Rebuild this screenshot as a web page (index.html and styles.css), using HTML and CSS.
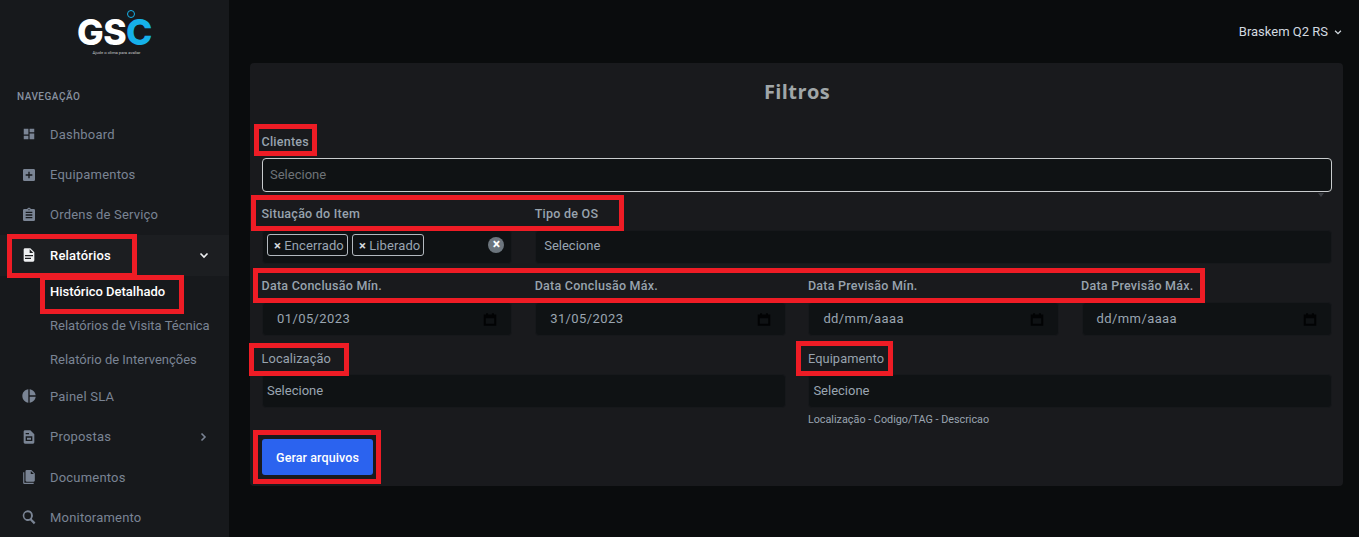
FILE: index.html
```html
<!DOCTYPE html>
<html lang="pt-BR">
<head>
    <meta charset="UTF-8">
    <meta name="viewport" content="width=device-width, initial-scale=1.0">
    <title>Filtros</title>
    <link rel="stylesheet" href="styles.css">
</head>
<body>

    <!-- Sidebar -->
    <aside class="sidebar">
        <div class="logo">
            <div class="logo-mark">GS<span class="logo-c">C</span><span class="logo-ring"></span></div>
            <div class="logo-tag">Ajude o clima para avaliar</div>
        </div>

        <div class="nav-title">NAVEGAÇÃO</div>

        <nav class="nav">
            <a class="nav-item" href="#">
                <svg class="nav-icon icon-sm" viewBox="0 0 24 24"><path d="M13,3V9H21V3M13,21H21V11H13M3,21H11V15H3M3,13H11V3H3V13Z"/></svg>
                Dashboard
            </a>
            <a class="nav-item" href="#">
                <svg class="nav-icon" viewBox="0 0 24 24"><path d="M19,3H5C3.89,3 3,3.89 3,5V19A2,2 0 0,0 5,21H19A2,2 0 0,0 21,19V5C21,3.89 20.1,3 19,3M17,13H13V17H11V13H7V11H11V7H13V11H17V13Z"/></svg>
                Equipamentos
            </a>
            <a class="nav-item" href="#">
                <svg class="nav-icon" viewBox="0 0 24 24"><path d="M19,3H14.82C14.4,1.84 13.3,1 12,1C10.7,1 9.6,1.84 9.18,3H5A2,2 0 0,0 3,5V19A2,2 0 0,0 5,21H19A2,2 0 0,0 21,19V5A2,2 0 0,0 19,3M12,3A1,1 0 0,1 13,4A1,1 0 0,1 12,5A1,1 0 0,1 11,4A1,1 0 0,1 12,3M7,7H17V9H7V7M7,11H17V13H7V11M7,15H17V17H7V15Z"/></svg>
                Ordens de Serviço
            </a>
            <a class="nav-item active" href="#">
                <svg class="nav-icon" viewBox="0 0 24 24"><path d="M13,9H18.5L13,3.5V9M6,2H14L20,8V20A2,2 0 0,1 18,22H6C4.89,22 4,21.1 4,20V4C4,2.89 4.89,2 6,2M15,18V16H6V18H15M18,14V12H6V14H18Z"/></svg>
                Relatórios
                <svg class="nav-arrow" viewBox="0 0 12 12"><path d="M2.5 4.5 6 8l3.5-3.5"/></svg>
            </a>
            <div class="sub-nav">
                <a class="sub-item current" href="#">Histórico Detalhado</a>
                <a class="sub-item" href="#">Relatórios de Visita Técnica</a>
                <a class="sub-item last" href="#">Relatório de Intervenções</a>
            </div>
            <a class="nav-item" href="#">
                <svg class="nav-icon" viewBox="0 0 24 24"><path d="M11,2V22C5.9,21.5 2,17.2 2,12C2,6.8 5.9,2.5 11,2M13,2V11H22C21.5,6.2 17.8,2.5 13,2M13,13V22C17.7,21.5 21.5,17.8 22,13H13Z"/></svg>
                Painel SLA
            </a>
            <a class="nav-item" href="#">
                <svg class="nav-icon" viewBox="0 0 24 24"><path fill-rule="evenodd" d="M6,2H14L20,8V20A2,2 0 0,1 18,22H6C4.89,22 4,21.1 4,20V4C4,2.89 4.89,2 6,2M7,6V8H12V6H7M7,11V18H17V11H7M9,13H15V16H9V13Z"/></svg>
                Propostas
                <svg class="nav-arrow closed" viewBox="0 0 12 12"><path d="M4.5 2.5 8 6l-3.5 3.5"/></svg>
            </a>
            <a class="nav-item" href="#">
                <svg class="nav-icon icon-sm" viewBox="0 0 24 24"><path d="M15,7H20.5L15,1.5V7M8,0H16L22,6V18A2,2 0 0,1 20,20H8C6.89,20 6,19.1 6,18V2A2,2 0 0,1 8,0M4,4V22H20V24H4A2,2 0 0,1 2,22V4H4Z"/></svg>
                Documentos
            </a>
            <a class="nav-item" href="#">
                <svg class="nav-icon" viewBox="0 0 24 24"><path fill-rule="evenodd" d="M10 2a8 8 0 0 1 6.3 12.9l5.4 5.4-2.4 2.4-5.4-5.4A8 8 0 1 1 10 2zm0 3a5 5 0 1 0 0 10 5 5 0 0 0 0-10z"/></svg>
                Monitoramento
            </a>
        </nav>
    </aside>

    <!-- Content -->
    <main class="content">
        <header class="topbar">
            <span>Braskem Q2 RS</span>
            <svg class="user-arrow" viewBox="0 0 12 12"><path d="M2.5 4.5 6 8l3.5-3.5"/></svg>
        </header>

        <section class="card">
            <h2 class="card-title">Filtros</h2>

            <div class="field">
                <label class="field-label first">Clientes</label>
                <div class="input input-focus">Selecione</div>
                <span class="input-caret"></span>
            </div>

            <div class="form-grid">
                <div class="field">
                    <label class="field-label">Situação do Item</label>
                    <div class="input input-tags">
                        <span class="tag"><b>×</b> Encerrado</span>
                        <span class="tag"><b>×</b> Liberado</span>
                        <span class="tags-clear">×</span>
                    </div>
                </div>
                <div class="field span-3">
                    <label class="field-label">Tipo de OS</label>
                    <div class="input input-select pad-wide">Selecione</div>
                </div>

                <div class="field">
                    <label class="field-label">Data Conclusão Mín.</label>
                    <div class="input input-date">01/05/2023
                        <svg class="date-icon" viewBox="0 0 12 12"><path d="M1.5 3h9v8h-9zM1.5 4.5h9M3.5 1v2M8.5 1v2"/></svg>
                    </div>
                </div>
                <div class="field">
                    <label class="field-label">Data Conclusão Máx.</label>
                    <div class="input input-date">31/05/2023
                        <svg class="date-icon" viewBox="0 0 12 12"><path d="M1.5 3h9v8h-9zM1.5 4.5h9M3.5 1v2M8.5 1v2"/></svg>
                    </div>
                </div>
                <div class="field">
                    <label class="field-label">Data Previsão Mín.</label>
                    <div class="input input-date">dd/mm/aaaa
                        <svg class="date-icon" viewBox="0 0 12 12"><path d="M1.5 3h9v8h-9zM1.5 4.5h9M3.5 1v2M8.5 1v2"/></svg>
                    </div>
                </div>
                <div class="field">
                    <label class="field-label">Data Previsão Máx.</label>
                    <div class="input input-date">dd/mm/aaaa
                        <svg class="date-icon" viewBox="0 0 12 12"><path d="M1.5 3h9v8h-9zM1.5 4.5h9M3.5 1v2M8.5 1v2"/></svg>
                    </div>
                </div>

                <div class="field span-2">
                    <label class="field-label plain">Localização</label>
                    <div class="input input-select">Selecione</div>
                </div>
                <div class="field span-2">
                    <label class="field-label plain">Equipamento</label>
                    <div class="input input-select">Selecione</div>
                    <small class="field-help">Localização - Codigo/TAG - Descricao</small>
                </div>
            </div>

            <button class="btn-primary" type="button">Gerar arquivos</button>
        </section>
    </main>

    <!-- Red annotation boxes drawn over the screenshot -->
    <div class="mark mark-relatorios"></div>
    <div class="mark mark-historico"></div>
    <div class="mark mark-clientes"></div>
    <div class="mark mark-situacao"></div>
    <div class="mark mark-datas"></div>
    <div class="mark mark-localizacao"></div>
    <div class="mark mark-equipamento"></div>
    <div class="mark mark-gerar"></div>

</body>
</html>
```

FILE: styles.css
```css
/* General */
* { margin: 0; padding: 0; box-sizing: border-box; }
html, body { height: 100%; overflow: hidden; }
body { display: flex; background: #0a0c0d; color: #9aa5b1; font-family: Roboto, "Liberation Sans", sans-serif;
    font-size: 13px; position: relative; }
a { text-decoration: none; color: inherit; }

/* Sidebar */
.sidebar { width: 229px; flex-shrink: 0; background: #17191c; height: 100%; overflow: hidden; }
.logo { height: 89px; display: flex; flex-direction: column; align-items: center; padding-top: 17px; }
.logo-mark { position: relative; font-family: Inter, sans-serif; font-weight: 800; font-size: 35.5px; line-height: 32px;
    color: #fff; letter-spacing: -0.6px; }
.logo-c { color: #16b1ea; }
.logo-ring { position: absolute; top: -7px; right: 17px; width: 8px; height: 8px; border: 1.5px solid #16b1ea; border-radius: 50%; }
.logo-tag { font-size: 4.2px; line-height: 6px; color: #c4c6c8; margin: 1px 0 0 4px; }

.nav-title { padding-left: 17px; font-size: 10px; line-height: 16px; font-weight: 500; letter-spacing: 0.5px; color: #8791a0; }
.nav { margin-top: 9px; }
.nav-item { display: flex; align-items: center; height: 40.4px; padding-left: 21px; color: #7a8494; letter-spacing: 0.2px; }
.nav-item.active { background: #1c1e21; color: #fff; font-weight: 500; }
.nav-icon { width: 16px; height: 16px; margin-right: 13px; fill: #7a8494; flex-shrink: 0; }
.icon-sm { width: 14px; height: 14px; margin: 0 14px 0 1px; }
.active .nav-icon { fill: #eef0f2; }
.nav-arrow { width: 12px; height: 12px; margin-left: auto; margin-right: 19px; fill: none; stroke: #eef0f2; stroke-width: 1.6; }
.nav-arrow.closed { stroke: #7a8494; margin-right: 20px; }

.sub-nav { margin-top: -1px; }
.sub-item { display: block; height: 34px; line-height: 34px; padding-left: 50px; color: #7a8494; }
.sub-item.current { color: #fff; font-weight: 500; line-height: 33px; }
.sub-item.last { height: 33.5px; }

/* Content */
.content { flex: 1; padding: 0 16px 0 21px; min-width: 0; }
.topbar { height: 63px; display: flex; align-items: center; justify-content: flex-end; color: #d3dae0; font-size: 13px; }
.user-arrow { width: 10px; height: 10px; margin-left: 5px; fill: none; stroke: #d3dae0; stroke-width: 1.5; }

.card { background: #191a1d; border-radius: 4px; height: 423px; padding: 0 11px 0 12px; }
.card-title { height: 58px; line-height: 57px; text-align: center; font-family: "Open Sans", sans-serif; font-size: 20px; font-weight: 700;
    letter-spacing: 0.4px; color: #a0a6a8; }

/* Form */
.form-grid { display: grid; grid-template-columns: repeat(4, 1fr); column-gap: 22.75px; }
.field { position: relative; }
.span-2 { grid-column: span 2; }
.span-3 { grid-column: span 3; }
.field-label { display: block; height: 38px; padding-top: 14px; margin-left: -0.5px; line-height: 16px; font-weight: 500; font-size: 12.5px;
    letter-spacing: 0.25px; color: #98a3ae; }
.field-label.first { height: 37px; padding-top: 13px; }
.field-label.plain { padding-top: 15px; font-weight: 400; font-size: 12.8px; letter-spacing: 0.1px; }
.input { height: 34px; line-height: 32px; background: #0f1214; border: 1px solid #16181b; border-radius: 4px; color: #9aa5b1; }
.input-focus { border-color: #c9ccce; padding-left: 7px; color: #6e7377; }
.input-select { padding-left: 4px; }
.input-select.pad-wide { padding-left: 8px; line-height: 29px; }
.input-caret { position: absolute; right: 8px; bottom: -5px; border: 3px solid transparent; border-top: 4px solid #3b3e43; border-bottom: 0; }

.input-tags { display: flex; align-items: flex-start; gap: 4px; padding: 3px 0 0 4px; position: relative; }
.tag { height: 22px; line-height: 21px; padding: 0 3px 0 6px; border: 1px solid #b3b9bf; border-radius: 3px; letter-spacing: 0.1px; }
.tag b { color: #d5dade; }
.tags-clear { position: absolute; right: 7px; top: 6px; width: 16px; height: 16px; line-height: 15px; text-align: center; border-radius: 50%;
    background: #6c757d; color: #fff; font-weight: 700; font-size: 14px; }

.input-date { display: flex; align-items: center; justify-content: space-between; padding: 0 14px; letter-spacing: 0.4px; }
.date-icon { width: 14px; height: 14px; fill: none; stroke: #020304; stroke-width: 1.7; }
.field-help { display: block; margin: 5px 0 0 -0.5px; font-size: 10.8px; line-height: 13px; color: #9aa5b1; }

.btn-primary { display: block; width: 111px; height: 36px; margin-top: 13px; background: #2b63ef; color: #fff; border: none; border-radius: 3px;
    font-family: inherit; font-size: 12.5px; font-weight: 500; letter-spacing: 0.1px; }

/* Red annotations */
.mark { position: absolute; border: 5px solid #ee1c25; }
.mark-relatorios { left: 7px; top: 234px; width: 130px; height: 44px; }
.mark-historico { left: 40px; top: 275px; width: 144px; height: 39px; }
.mark-clientes { left: 254px; top: 124px; width: 63px; height: 32px; }
.mark-situacao { left: 251px; top: 195px; width: 373px; height: 36px; }
.mark-datas { left: 253px; top: 268px; width: 952px; height: 35px; }
.mark-localizacao { left: 249px; top: 343px; width: 100px; height: 33px; }
.mark-equipamento { left: 796px; top: 341px; width: 97px; height: 35px; }
.mark-gerar { left: 253px; top: 430px; width: 128px; height: 54px; }
```
